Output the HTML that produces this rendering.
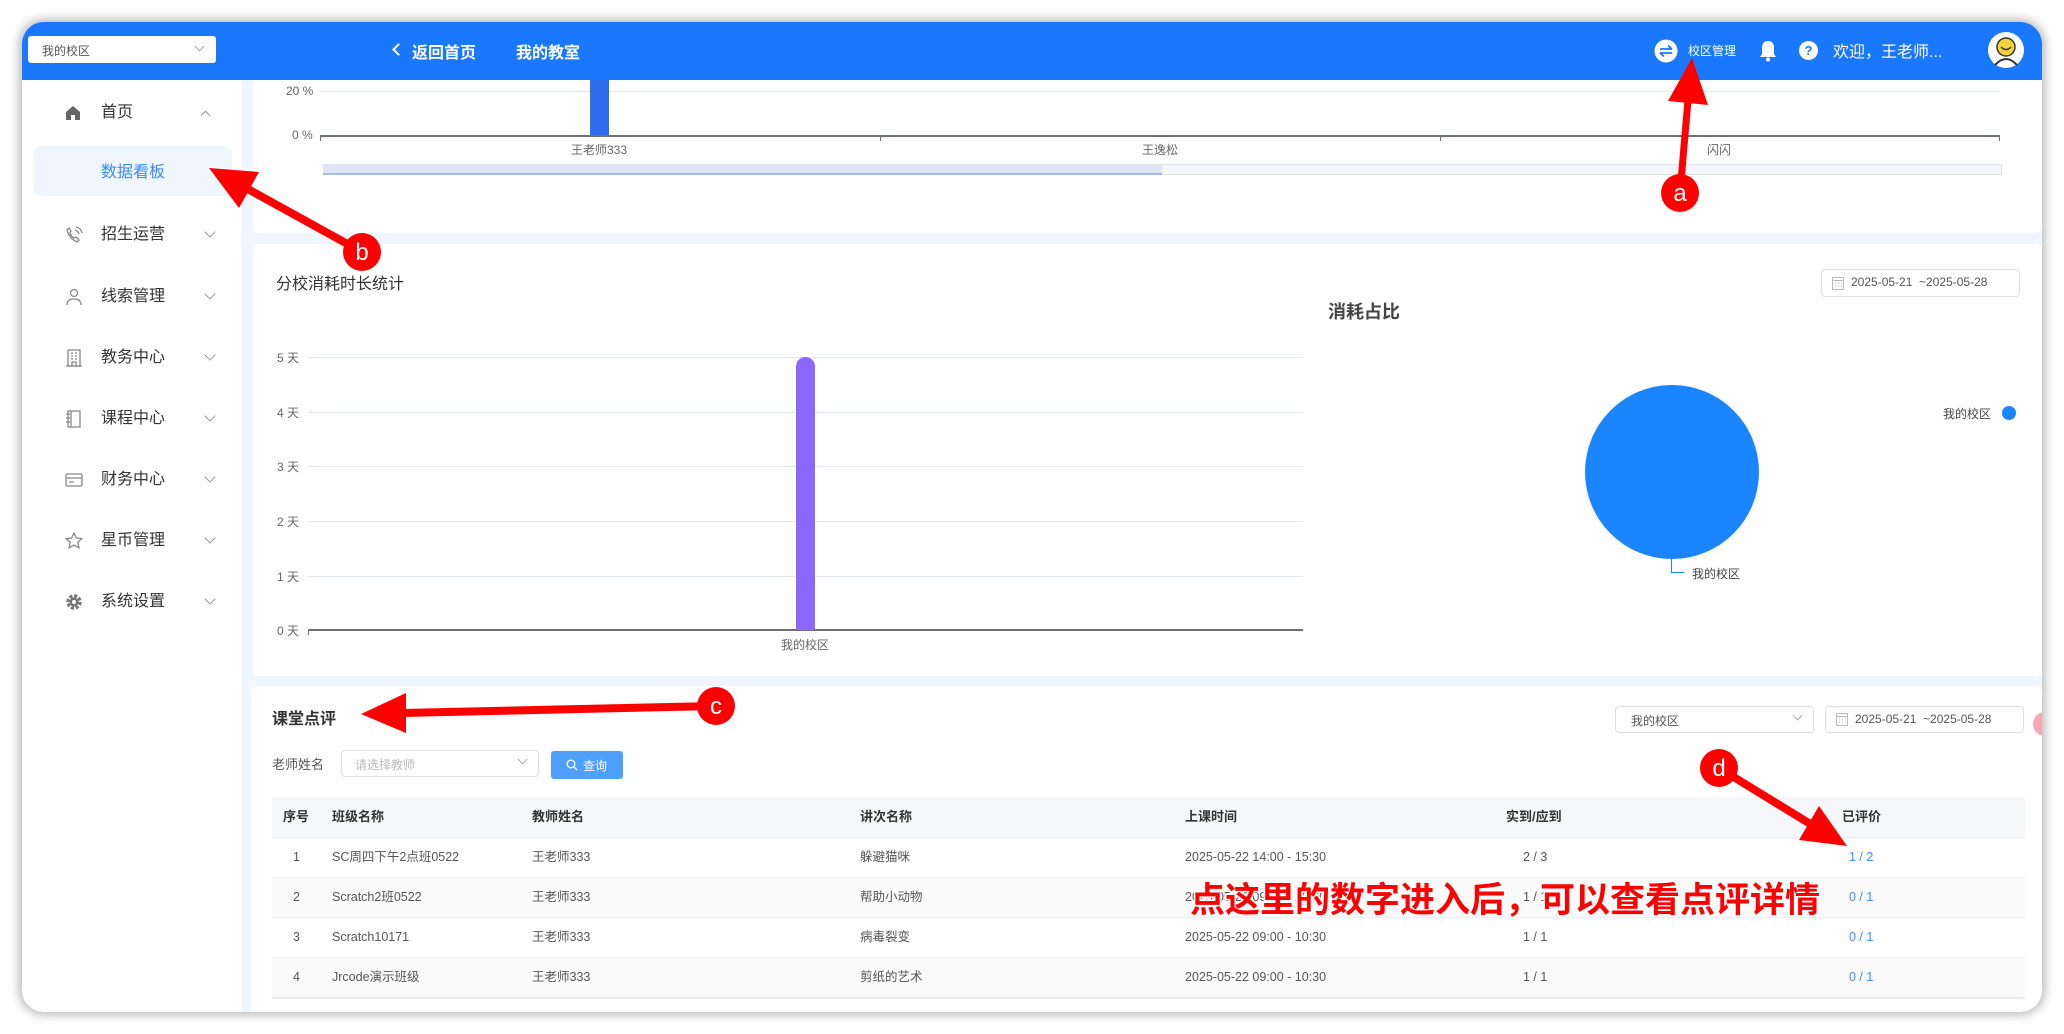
<!DOCTYPE html>
<html><head><meta charset="utf-8"><style>
*{margin:0;padding:0;box-sizing:border-box}
body{width:2064px;height:1034px;background:#fff;position:relative;overflow:hidden;font-family:"Liberation Sans","Noto Sans CJK SC",sans-serif;color:#333}
.a{position:absolute;white-space:nowrap}
#win{position:absolute;left:22px;top:22px;width:2020px;height:990px;border-radius:22px;overflow:hidden;background:#f0f6fe;box-shadow:0 0 10px 3px rgba(0,0,0,.28)}
.card{position:absolute;background:#fff;border-radius:6px}
.mi{position:absolute;left:79px;font-size:16px;color:#333;line-height:22px}
.chev{position:absolute;left:184px;width:8px;height:8px;border-right:1.2px solid #999;border-bottom:1.2px solid #999;transform:rotate(45deg)}
.yl{position:absolute;font-size:12px;color:#666}
.gl{position:absolute;height:1px;background:#e3e7f1}
.th{position:absolute;font-size:13px;font-weight:bold;color:#333;line-height:18px}
.td{position:absolute;font-size:12.5px;color:#555;line-height:18px}
</style></head><body>
<div id="win">
 <!-- header -->
 <div class="a" style="left:0;top:0;width:2020px;height:58px;background:#1a78fe"></div>
 <div class="a" style="left:6px;top:14px;width:188px;height:27px;background:#fff;border-radius:3px"></div>
 <div class="a" style="left:20px;top:20px;font-size:12px;color:#555">我的校区</div>
 <div class="a" style="left:174px;top:21px;width:7px;height:7px;border-right:1px solid #aaa;border-bottom:1px solid #aaa;transform:rotate(45deg)"></div>
 <div class="a" style="left:372px;top:23px;width:9px;height:9px;border-left:2px solid #fff;border-bottom:2px solid #fff;transform:rotate(45deg)"></div>
 <div class="a" style="left:390px;top:17px;font-size:16px;color:#fff;font-weight:bold">返回首页</div>
 <div class="a" style="left:494px;top:17px;font-size:16px;color:#fff;font-weight:bold">我的教室</div>
 <svg class="a" style="left:1632px;top:17px" width="24" height="24" viewBox="0 0 24 24"><circle cx="12" cy="12" r="11.5" fill="#fff"/><path d="M6 10h12M14 6.5 18 10M6 14h12M10 17.5 6 14" stroke="#1a78fe" stroke-width="1.8" fill="none"/></svg>
 <div class="a" style="left:1666px;top:20px;font-size:12px;color:#fff">校区管理</div>
 <svg class="a" style="left:1736px;top:17px" width="20" height="24" viewBox="0 0 20 24"><path d="M10 2c-4 0-6 3-6 7v6l-2 3h16l-2-3V9c0-4-2-7-6-7z" fill="#fff"/><circle cx="10" cy="20.5" r="2" fill="#fff"/></svg>
 <svg class="a" style="left:1777px;top:19px" width="19" height="19" viewBox="0 0 19 19"><circle cx="9.5" cy="9.5" r="9.5" fill="#fff"/><text x="9.5" y="14" font-size="13" font-weight="bold" text-anchor="middle" fill="#1a78fe" font-family="Liberation Sans">?</text></svg>
 <div class="a" style="left:1811px;top:16px;font-size:16px;color:#fff">欢迎，王老师...</div>
 <svg class="a" style="left:1966px;top:10px" width="36" height="36" viewBox="0 0 36 36"><circle cx="18" cy="18" r="18" fill="#fff"/><circle cx="18" cy="15" r="9" fill="#f5d33b" stroke="#333" stroke-width="1.5"/><path d="M13 15q5 5 10 0" stroke="#333" stroke-width="1.5" fill="none"/><path d="M7 33q11-12 22 0" stroke="#333" stroke-width="2" fill="none"/></svg>

 <!-- sidebar -->
 <div class="a" style="left:0;top:58px;width:220px;height:940px;background:#fff"></div>
 <svg class="a" style="left:43px;top:83px" width="16" height="16" viewBox="0 0 16 16"><path d="M8 1 1 7v8h5v-5h4v5h5V7z" fill="#666"/></svg>
 <div class="mi" style="top:80px">首页</div>
 <div class="a" style="left:180px;top:90px;width:7px;height:7px;border-left:1.2px solid #999;border-top:1.2px solid #999;transform:rotate(45deg)"></div>
 <div class="a" style="left:11px;top:124px;width:199px;height:50px;background:#f0f6fe;border-radius:8px"></div>
 <div class="a" style="left:79px;top:140px;font-size:16px;color:#3a8bff;line-height:22px">数据看板</div>
 <svg class="a" style="left:43px;top:204px" width="18" height="18" viewBox="0 0 18 18" fill="none" stroke="#888" stroke-width="1.3"><path d="M4 2 2 4q2 8 10 12l2-2-3-3-2 1q-3-2-4-5l1-2z"/><path d="M10 4q3 1 4 4M11 1q5 1 6 6"/></svg>
 <div class="mi" style="top:202px">招生运营</div><div class="chev" style="top:206px"></div>
 <svg class="a" style="left:43px;top:266px" width="18" height="18" viewBox="0 0 18 18" fill="none" stroke="#888" stroke-width="1.3"><circle cx="9" cy="5" r="3.5"/><path d="M2 17q0-6 7-6t7 6"/></svg>
 <div class="mi" style="top:264px">线索管理</div><div class="chev" style="top:268px"></div>
 <svg class="a" style="left:43px;top:327px" width="18" height="18" viewBox="0 0 18 18" fill="none" stroke="#888" stroke-width="1.3"><rect x="3" y="1" width="12" height="16"/><path d="M6 4h2M10 4h2M6 7h2M10 7h2M6 10h2M10 10h2M7 17v-4h4v4M1 17h16"/></svg>
 <div class="mi" style="top:325px">教务中心</div><div class="chev" style="top:329px"></div>
 <svg class="a" style="left:43px;top:388px" width="18" height="18" viewBox="0 0 18 18" fill="none" stroke="#888" stroke-width="1.3"><rect x="3" y="1" width="12" height="16"/><path d="M6 1v16M1 4h4M1 8h4M1 12h4"/></svg>
 <div class="mi" style="top:386px">课程中心</div><div class="chev" style="top:390px"></div>
 <svg class="a" style="left:43px;top:449px" width="18" height="18" viewBox="0 0 18 18" fill="none" stroke="#888" stroke-width="1.3"><rect x="1" y="3" width="16" height="12" rx="1.5"/><path d="M1 7h16M4 11h5"/></svg>
 <div class="mi" style="top:447px">财务中心</div><div class="chev" style="top:451px"></div>
 <svg class="a" style="left:43px;top:510px" width="18" height="18" viewBox="0 0 18 18" fill="none" stroke="#888" stroke-width="1.3"><path d="M9 1l2.4 5 5.4.6-4 3.7 1.1 5.4L9 13l-4.9 2.7 1.1-5.4-4-3.7L6.6 6z"/></svg>
 <div class="mi" style="top:508px">星币管理</div><div class="chev" style="top:512px"></div>
 <svg class="a" style="left:43px;top:571px" width="18" height="18" viewBox="0 0 18 18"><circle cx="9" cy="9" r="6" fill="none" stroke="#777" stroke-width="3.5" stroke-dasharray="3 1.7"/><circle cx="9" cy="9" r="4.5" fill="#777"/><circle cx="9" cy="9" r="2" fill="#fff"/></svg>
 <div class="mi" style="top:569px">系统设置</div><div class="chev" style="top:573px"></div>

 <!-- card1 -->
 <div class="card" style="left:231px;top:58px;width:1789px;height:153px;border-radius:0 0 6px 6px"></div>
 <div class="yl" style="left:264px;top:62px">20 %</div>
 <div class="yl" style="left:270px;top:106px">0 %</div>
 <div class="gl" style="left:298px;top:69px;width:1680px"></div>
 <div class="a" style="left:568px;top:58px;width:19px;height:56px;background:#2f6fef"></div>
 <div class="a" style="left:298px;top:113px;width:1680px;height:1.5px;background:#6e7079"></div>
 <div class="a" style="left:858px;top:114px;width:1px;height:5px;background:#6e7079"></div>
 <div class="a" style="left:1418px;top:114px;width:1px;height:5px;background:#6e7079"></div>
 <div class="a" style="left:1977px;top:114px;width:1px;height:5px;background:#6e7079"></div>
 <div class="a" style="left:298px;top:114px;width:1px;height:5px;background:#6e7079"></div>
 <div class="a" style="left:549px;top:119px;font-size:12px;color:#666">王老师333</div>
 <div class="a" style="left:1120px;top:119px;font-size:12px;color:#666">王逸松</div>
 <div class="a" style="left:1685px;top:119px;font-size:12px;color:#666">闪闪</div>
 <div class="a" style="left:301px;top:142px;width:1679px;height:11px;border:1px solid #dde3f0;background:#f4f6fb"></div>
 <div class="a" style="left:301px;top:142px;width:839px;height:11px;background:#dfe5f3;border-bottom:2px solid #a9b9e8"></div>

 <!-- card2 -->
 <div class="card" style="left:231px;top:222px;width:1789px;height:432px"></div>
 <div class="a" style="left:254px;top:248px;font-size:16px;color:#333">分校消耗时长统计</div>
 <div class="yl" style="left:255px;top:327px">5 天</div><div class="gl" style="left:286px;top:335px;width:995px"></div>
 <div class="yl" style="left:255px;top:382px">4 天</div><div class="gl" style="left:286px;top:390px;width:995px"></div>
 <div class="yl" style="left:255px;top:436px">3 天</div><div class="gl" style="left:286px;top:444px;width:995px"></div>
 <div class="yl" style="left:255px;top:491px">2 天</div><div class="gl" style="left:286px;top:499px;width:995px"></div>
 <div class="yl" style="left:255px;top:546px">1 天</div><div class="gl" style="left:286px;top:554px;width:995px"></div>
 <div class="yl" style="left:255px;top:600px">0 天</div>
 <div class="a" style="left:286px;top:607px;width:995px;height:1.5px;background:#6e7079"></div>
 <div class="a" style="left:286px;top:608px;width:1px;height:5px;background:#6e7079"></div>
 <div class="a" style="left:774px;top:335px;width:19px;height:273px;background:#8b66ff;border-radius:10px 10px 0 0"></div>
 <div class="a" style="left:759px;top:614px;font-size:12px;color:#666">我的校区</div>
 <div class="a" style="left:1306px;top:276px;font-size:18px;font-weight:bold;color:#444">消耗占比</div>
 <div class="a" style="left:1799px;top:247px;width:199px;height:28px;border:1px solid #dcdfe6;border-radius:4px;background:#fff"></div>
 <svg class="a" style="left:1810px;top:254px" width="12" height="14" viewBox="0 0 12 14" fill="none" stroke="#bbb"><rect x=".5" y="1.5" width="11" height="12"/><path d="M.5 4.5h11M3 7h1M6 7h1M9 7h1M3 10h1M6 10h1M9 10h1"/></svg>
 <div class="a" style="left:1829px;top:253px;font-size:12px;color:#555">2025-05-21 &nbsp;~2025-05-28</div>
 <div class="a" style="left:1563px;top:363px;width:174px;height:174px;border-radius:50%;background:#1b84ff"></div>
 <div class="a" style="left:1649px;top:537px;width:13px;height:14px;border-left:1px solid #1b84ff;border-bottom:1px solid #1b84ff"></div>
 <div class="a" style="left:1670px;top:543px;font-size:12px;color:#444">我的校区</div>
 <div class="a" style="left:1921px;top:383px;font-size:12px;color:#444">我的校区</div>
 <div class="a" style="left:1980px;top:384px;width:14px;height:14px;border-radius:50%;background:#1b84ff"></div>

 <!-- card3 -->
 <div class="card" style="left:229px;top:664px;width:1791px;height:340px"></div>
 <div class="a" style="left:250px;top:683px;font-size:16px;font-weight:bold;color:#333">课堂点评</div>
 <div class="a" style="left:250px;top:732px;font-size:13px;color:#555">老师姓名</div>
 <div class="a" style="left:319px;top:728px;width:198px;height:27px;border:1px solid #dcdfe6;border-radius:4px"></div>
 <div class="a" style="left:333px;top:734px;font-size:12px;color:#bbb">请选择教师</div>
 <div class="a" style="left:497px;top:734px;width:7px;height:7px;border-right:1px solid #aaa;border-bottom:1px solid #aaa;transform:rotate(45deg)"></div>
 <div class="a" style="left:529px;top:729px;width:72px;height:28px;background:#4ea0ff;border-radius:3px"></div>
 <svg class="a" style="left:544px;top:737px" width="12" height="12" viewBox="0 0 12 12" fill="none" stroke="#fff" stroke-width="1.4"><circle cx="5" cy="5" r="3.8"/><path d="M8 8l3 3"/></svg>
 <div class="a" style="left:561px;top:735px;font-size:12px;color:#fff">查询</div>
 <div class="a" style="left:1593px;top:684px;width:199px;height:27px;border:1px solid #dcdfe6;border-radius:4px"></div>
 <div class="a" style="left:1609px;top:690px;font-size:12px;color:#555">我的校区</div>
 <div class="a" style="left:1772px;top:690px;width:7px;height:7px;border-right:1px solid #aaa;border-bottom:1px solid #aaa;transform:rotate(45deg)"></div>
 <div class="a" style="left:1803px;top:684px;width:199px;height:27px;border:1px solid #dcdfe6;border-radius:4px"></div>
 <svg class="a" style="left:1814px;top:690px" width="12" height="14" viewBox="0 0 12 14" fill="none" stroke="#bbb"><rect x=".5" y="1.5" width="11" height="12"/><path d="M.5 4.5h11M3 7h1M6 7h1M9 7h1M3 10h1M6 10h1M9 10h1"/></svg>
 <div class="a" style="left:1833px;top:690px;font-size:12px;color:#555">2025-05-21 &nbsp;~2025-05-28</div>
 <div class="a" style="left:2011px;top:690px;width:24px;height:24px;border-radius:50%;background:#f7a7b6"></div>

 <div class="a" style="left:250px;top:775px;width:1753px;height:40px;background:#f5f7fa"></div>
 <div class="a" style="left:250px;top:855px;width:1753px;height:40px;background:#fafafa"></div>
 <div class="a" style="left:250px;top:935px;width:1753px;height:40px;background:#fafafa"></div>
 <div class="a" style="left:250px;top:815px;width:1753px;height:1px;background:#ebeef5"></div>
 <div class="a" style="left:250px;top:855px;width:1753px;height:1px;background:#ebeef5"></div>
 <div class="a" style="left:250px;top:895px;width:1753px;height:1px;background:#ebeef5"></div>
 <div class="a" style="left:250px;top:935px;width:1753px;height:1px;background:#ebeef5"></div>
 <div class="a" style="left:250px;top:975px;width:1753px;height:2px;background:#ebeef5"></div>
 <div class="th" style="left:261px;top:786px">序号</div>
 <div class="th" style="left:310px;top:786px">班级名称</div>
 <div class="th" style="left:510px;top:786px">教师姓名</div>
 <div class="th" style="left:838px;top:786px">讲次名称</div>
 <div class="th" style="left:1163px;top:786px">上课时间</div>
 <div class="th" style="left:1484px;top:786px">实到/应到</div>
 <div class="th" style="left:1820px;top:786px">已评价</div>

 <div class="td" style="left:271px;top:826px">1</div><div class="td" style="left:310px;top:826px">SC周四下午2点班0522</div><div class="td" style="left:510px;top:826px">王老师333</div><div class="td" style="left:838px;top:826px">躲避猫咪</div><div class="td" style="left:1163px;top:826px">2025-05-22 14:00 - 15:30</div><div class="td" style="left:1501px;top:826px">2 / 3</div><div class="td" style="left:1827px;top:826px;color:#3a8bff">1 / 2</div>
 <div class="td" style="left:271px;top:866px">2</div><div class="td" style="left:310px;top:866px">Scratch2班0522</div><div class="td" style="left:510px;top:866px">王老师333</div><div class="td" style="left:838px;top:866px">帮助小动物</div><div class="td" style="left:1163px;top:866px">2025-05-22 09:00 - 10:30</div><div class="td" style="left:1501px;top:866px">1 / 1</div><div class="td" style="left:1827px;top:866px;color:#3a8bff">0 / 1</div>
 <div class="td" style="left:271px;top:906px">3</div><div class="td" style="left:310px;top:906px">Scratch10171</div><div class="td" style="left:510px;top:906px">王老师333</div><div class="td" style="left:838px;top:906px">病毒裂变</div><div class="td" style="left:1163px;top:906px">2025-05-22 09:00 - 10:30</div><div class="td" style="left:1501px;top:906px">1 / 1</div><div class="td" style="left:1827px;top:906px;color:#3a8bff">0 / 1</div>
 <div class="td" style="left:271px;top:946px">4</div><div class="td" style="left:310px;top:946px">Jrcode演示班级</div><div class="td" style="left:510px;top:946px">王老师333</div><div class="td" style="left:838px;top:946px">剪纸的艺术</div><div class="td" style="left:1163px;top:946px">2025-05-22 09:00 - 10:30</div><div class="td" style="left:1501px;top:946px">1 / 1</div><div class="td" style="left:1827px;top:946px;color:#3a8bff">0 / 1</div>
</div>

<!-- annotations -->
<svg class="a" style="left:0;top:0" width="2064" height="1034" viewBox="0 0 2064 1034">
 <g fill="#f00" stroke="none">
  <line x1="1680" y1="193" x2="1688" y2="100" stroke="#f00" stroke-width="7"/>
  <polygon points="1692,58 1708,105 1668,101"/>
  <circle cx="1680" cy="193" r="19"/>
  <line x1="362" y1="252" x2="246" y2="188" stroke="#f00" stroke-width="8"/>
  <polygon points="209,168 259,172 239,208"/>
  <circle cx="362" cy="252" r="19"/>
  <line x1="716" y1="706" x2="402" y2="713" stroke="#f00" stroke-width="8"/>
  <polygon points="361,714 406,693 406,733"/>
  <circle cx="716" cy="706" r="19"/>
  <line x1="1719" y1="768" x2="1812" y2="825" stroke="#f00" stroke-width="8"/>
  <polygon points="1847,846 1819,806 1799,840"/>
  <circle cx="1719" cy="768" r="19"/>
 </g>
 <g fill="#fff" font-family="Liberation Sans" font-size="24" text-anchor="middle">
  <text x="1680" y="201">a</text><text x="362" y="260">b</text><text x="716" y="714">c</text><text x="1719" y="776">d</text>
 </g>
 <text x="1190" y="912" font-size="35" font-weight="bold" fill="#f00" stroke="#fff" stroke-width="3" paint-order="stroke" font-family="'Noto Sans CJK SC',sans-serif">点这里的数字进入后，可以查看点评详情</text>
</svg>
</body></html>
